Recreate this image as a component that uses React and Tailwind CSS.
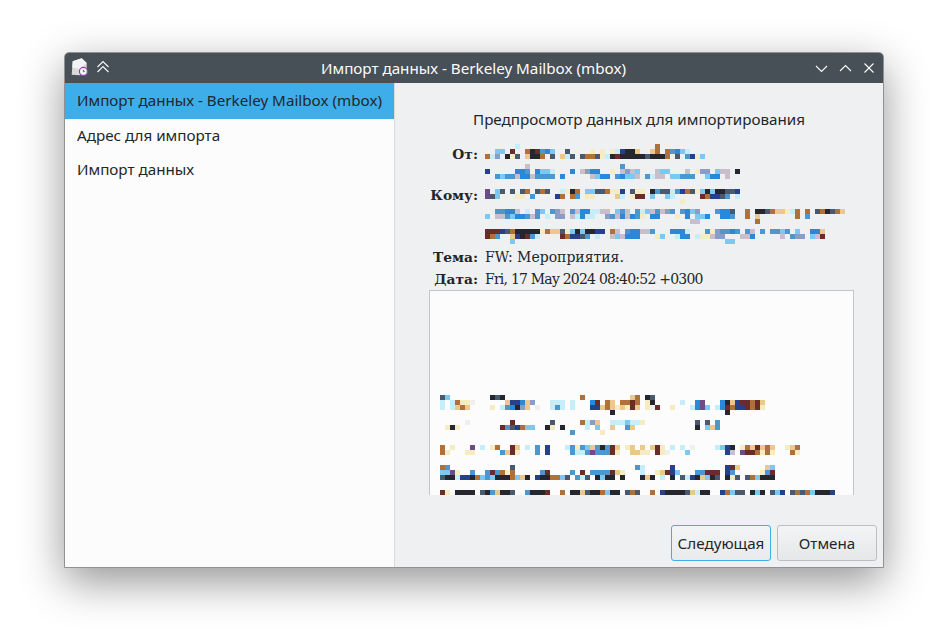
const COLORS = {
  d: "#26262e",
  s: "#4a5a6e",
  n: "#27408b",
  b: "#2b88d8",
  u: "#4d97cc",
  l: "#7cc8f0",
  c: "#c5eef8",
  w: "#eef0ec",
  y: "#f5ecc4",
  t: "#ebc98c",
  o: "#b0703a",
  m: "#6a2c28",
  p: "#6e4a88",
  g: "#c9bfcc",
  h: "#8a9cc8",
};

/* blurred addresses, one string per 5px row: "<cell><colour>" */
const FROM_ROWS = [
  "6c 34o",
  "2l 3l 5m 6w 8o 9d 10m 11u 12b 13l 16s 18w 21y 23y 25y 26c 27n 28d 29d 30t 33t 34o 36o 37u 38b 39l 40c",
  "0o 1c 2h 4d 5y 6s 8t 9d 10d 11o 13s 15t 16c 17s 19s 20o 21o 22s 23y 24c 25d 26m 27d 28d 29d 30d 31d 32s 33d 34d 35d 36o 37w 38s 40u 41n 42y 43l",
  "",
  "8g 27u 32w",
  "0n 6b 7b 8u 10b 11l 12l 13c 14w 15w 17b 19g 20h 21b 22b 25y 26w 27g 28h 29g 30l 34g 35l 36l 40g 42y 43h 44h 46l 47g 48g 50d",
  "2u 3l 4u 5u 6g 7b 8b 9g 10u 11u 12u 13u 15b 21g 22l 23b 24b 26u 27b 28l 29l 30g 31w 32u 33c 34g 35g 37l 38l 39u 40u 41u 43w 44l 45b 46b 48g",
];

const TO_ROWS = [
  "",
  "0p 2l 3s 5s 7s 8o 10s 11o 12s 15c 16y 17d 18o 20l 21l 22s 23s 24o 25y 26y 27n 29s 30y 31y 33d 34u 35s 36s 37c 38u 39n 40o 41s 42y 43l 44d 45l 46d 47d 48s 49s 50n",
  "0p 1s 2l 3w 4w 6y 7y 9u 14n 15o 17o 18u 20y 21y 26t 27c 29y 30m 31m 33l 36l 37c 43m 44o 45n 46n 47s 48u 50c",
  "39y",
  "",
  "1w 2u 3u 4b 5b 6g 8c 10u 11l 13u 14h 15g 17u 18g 19b 20b 21c 22c 23g 24g 26l 27u 28g 30u 31c 32l 33g 34u 35g 36h 37u 39u 40b 41l 42h 46u 47b 48b 49s 52o 54d 55d 56s 57o 58t 59t 60y 61c 62o 64o 66s 67o 68d 69s 70o 71t",
  "0l 2g 3g 4u 5l 6b 7b 8u 9g 10u 12c 14h 15h 17g 18c 19b 20c 21c 24h 25u 26g 27b 28g 29b 30u 31y 32w 33b 34b 38y 40b 42l 43l 44b 47b 48b 49u 52o 54t 62o 64u",
  "41g 42g 54o",
  "",
  "0m 1m 2m 3n 4s 5o 6d 7d 8d 9d 10d 11y 12o 13t 14t 15s 16y 17l 18d 19l 20d 21d 22n 23n 25o 26g 28u 29b 30b 31g 32g 33u 35w 36w 37b 38b 39b 40c 41w 44u 45y 46h 47u 48u 49b 50u 52u 53g 55u 57u 58u 59l 60u 62l 65b 66b 67t",
  "0m 1o 2u 5t 6n 7d 8m 9u 10c 15m 16o 17n 18n 19s 20u 22c 24w 25g 26l 27g 28b 29b 30b 34y 35l 36w 38c 39b 40b 42c 43y 44y 45g 46h 47h 51g 52g 53b 59g 61u 62h 63h 65l 66g 67m",
  "5l 48l 49l",
];

const BODY_ROWS = [
  "0s 1l 10d 11s 12d 28o 38t 39o 41d 42s",
  "0c 2c 3o 4y 5y 6w 13t 14n 15n 16b 17t 18h 22c 23c 24c 26c 30b 31m 33o 34t 36o 37o 38m 39o 41y 42d 48c 51b 52p 56b 57d 58t 59n 60m 61m 62o 63m 64t",
  "0c 2c 3t 4o 5t 10y 12c 13u 14b 15d 16h 17t 19w 22c 23u 24c 26c 30n 31n 32t 33o 34t 35y 36t 37y 38m 39t 41y 42w 43m 46y 50c 51b 52p 53l 55c 56b 57m 58o 59n 60n 61m 62o 63m 64y",
  "34d 57d",
  "",
  "5w 14m 22s 28o 29c 30h 31t 34c 35c 36c 37l 38c 39c 40y 51s 53s 55u",
  "1y 2d 3y 12m 13u 14s 15n 16o 17l 18l 21d 22y 24d 29c 31l 34t 37u 38t 51d 53l 54t 55u",
  "26u 32y",
  "",
  "",
  "0o 2y 6p 8c 10y 11o 14m 15t 17c 19u 21n 25c 26u 27y 28u 29l 30t 31u 32d 33u 34m 35t 37y 38t 40t 42t 43m 44y 46c 48c 50w 55c 56l 57n 58d 60y 61o 62t 63m 64t 65o 66t 69y 70t 71o",
  "0o 1y 5y 6y 12u 13t 14m 15y 19u 21n 26u 27c 28c 29u 30p 31u 32u 33u 34m 35y 38t 39t 40y 41y 43m 44y 45w 49l 57n 58g 60p 61m 62m 63o 64y 65o 66y 70o 71y",
  "",
  "",
  "0o 1u 14s 39u 40c 46n 57n 58m 59t 65t 66l",
  "0l 1l 2p 3y 6u 9u 10m 11u 12o 13y 14o 20u 21m 26u 28m 30u 31u 32u 33u 34m 35t 36y 40c 43y 44t 45m 46n 47l 51u 52u 53m 54m 55m 57n 58u 64y 65u 66m",
  "0s 1d 2d 3c 4n 5n 6d 7o 8l 9u 10l 11d 12d 13d 14o 15l 16t 17d 19n 20d 21d 22o 23o 24l 25s 27u 28c 29s 31d 32l 33d 34d 36d 40d 41t 42d 44c 46d 48s 49c 50n 51d 52t 53l 54d 55s 57d 58y 59s 61s 62o 63l 64d 65d 66d",
  "",
  "",
  "0m 1y 3d 4d 5d 6d 8s 9d 10u 11t 12d 13d 14s 17u 18d 19d 20d 21m 24o 26d 27d 28t 29s 30d 31d 32o 33l 34d 35d 37s 38o 39s 42o 44n 45d 46d 47d 48d 49s 50t 51c 52d 53d 56n 57o 58l 59s 60s 62d 63l 64d 66s 67l 68n 70s 71o 72s 73o 74l 75d 76d 77d 78n",
];

function Mosaic({ rows, width }) {
  return (
    <svg width={width} height={rows.length * 5} className="block" shapeRendering="crispEdges">
      {rows.map((row, y) =>
        row
          .split(" ")
          .filter(Boolean)
          .map((cell) => (
            <rect
              key={`${y}-${cell}`}
              x={parseInt(cell, 10) * 5}
              y={y * 5}
              width="5"
              height="5"
              fill={COLORS[cell.slice(-1)]}
            />
          ))
      )}
    </svg>
  );
}

function AppIcon() {
  return (
    <svg width="20" height="20" viewBox="0 0 20 20" className="shrink-0">
      <path d="M2.7 3.3 L11.7 0.3 L16.7 5 L16.7 13 L10 17.3 L1.7 16.7 Z" fill="#d9d9d9" />
      <path d="M2.7 3.3 L11.7 0.3 L16.7 5 L10 11 L2.3 9.5 Z" fill="#f2f2f2" />
      <circle cx="13.4" cy="13.4" r="4" fill="#f4f4f4" stroke="#8e44ad" strokeWidth="1.2" />
      <path d="M13.4 11.8 V13.6 H14.8" fill="none" stroke="#555555" strokeWidth="0.9" />
    </svg>
  );
}

function Label({ children }) {
  return (
    <div className="w-[83px] text-right font-bold text-[13.8px] leading-[20px] text-[#232629]">
      {children}
    </div>
  );
}

const titleText = "Импорт данных - Berkeley Mailbox (mbox)";

export default function App() {
  return (
    <div className="w-[948px] h-[644px] bg-white pl-[64px] pt-[52px] font-['Noto_Sans',sans-serif] overflow-hidden">
      <div className="w-[820px] h-[516px] flex flex-col rounded-t-[5px] border border-[#8f9194] bg-[#eff0f1] shadow-[0_14px_44px_rgba(0,0,0,0.42)]">
        {/* TITLE BAR */}
        <div className="h-[30px] shrink-0 flex items-center bg-[#475057] rounded-t-[4px] pl-[5px] pr-[8px] text-[#fcfcfc]">
          <AppIcon />
          <svg width="14" height="14" viewBox="0 0 14 14" className="ml-[6px] shrink-0 -mt-[2px]">
            <path d="M1.5 7 L7 1.5 L12.5 7 M1.5 12 L7 6.5 L12.5 12" fill="none" stroke="#fcfcfc" strokeWidth="1.1" />
          </svg>
          <div className="flex-1 text-center text-[15.2px] ml-[22px]">{titleText}</div>
          <div className="flex items-center gap-[11px]">
            <svg width="13" height="13" viewBox="0 0 13 13">
              <path d="M1 4 L6.5 9.5 L12 4" fill="none" stroke="#fcfcfc" strokeWidth="1.1" />
            </svg>
            <svg width="13" height="13" viewBox="0 0 13 13">
              <path d="M1 9 L6.5 3.5 L12 9" fill="none" stroke="#fcfcfc" strokeWidth="1.1" />
            </svg>
            <svg width="12" height="12" viewBox="0 0 12 12">
              <path d="M1.5 1.5 L10.5 10.5 M10.5 1.5 L1.5 10.5" fill="none" stroke="#fcfcfc" strokeWidth="1.1" />
            </svg>
          </div>
        </div>

        <div className="flex-1 flex min-h-0">
          {/* STEPS */}
          <div className="w-[330px] shrink-0 bg-[#fcfcfc] border-r border-[#d8dadc] text-[15.2px] text-[#232629]">
            <div className="h-[36px] flex items-center pl-[12px] pb-[2px] bg-[#3daee9]">{titleText}</div>
            <div className="h-[34px] flex items-center pl-[12px] pb-[2px]">Адрес для импорта</div>
            <div className="h-[34px] flex items-center pl-[12px] pb-[2px]">Импорт данных</div>
          </div>

          {/* PREVIEW */}
          <div className="flex-1 flex flex-col min-w-0">
            <div className="h-[61px] pt-[26px] text-center text-[15.2px] leading-[20px] text-[#232629]">
              Предпросмотр данных для импортирования
            </div>
            <div className="font-['DejaVu_Serif',serif]">
              <div className="flex">
                <Label>От:</Label>
                <div className="ml-[7px]">
                  <Mosaic rows={FROM_ROWS} width={360} />
                </div>
              </div>
              <div className="flex mt-[5px]">
                <div className="pt-[1px]">
                  <Label>Кому:</Label>
                </div>
                <div className="ml-[7px]">
                  <Mosaic rows={TO_ROWS} width={362} />
                </div>
              </div>
              <div className="flex mt-[2px] items-center h-[22px]">
                <Label>Тема:</Label>
                <div className="ml-[7px] text-[14px] text-[#232629]">FW: Мероприятия.</div>
              </div>
              <div className="flex items-center h-[22px]">
                <Label>Дата:</Label>
                <div className="ml-[7px] text-[14px] tracking-[-0.78px] text-[#232629]">Fri, 17 May 2024 08:40:52 +0300</div>
              </div>
            </div>
            <div className="ml-[34px] w-[425px] h-[205px] shrink-0 overflow-hidden bg-[#fcfcfc] border-x border-t border-[#c2c4c6] pl-[10px] pt-[104px]">
              <Mosaic rows={BODY_ROWS} width={400} />
            </div>
            <div className="flex justify-end gap-[6px] pr-[6px] mt-[30px]">
              <button className="w-[100px] h-[36px] rounded-[3px] border border-[#3daee9] bg-gradient-to-b from-[#f3f4f5] to-[#e9eaeb] text-[15.2px] text-[#232629]">
                Следующая
              </button>
              <button className="w-[100px] h-[36px] rounded-[3px] border border-[#bcbec0] bg-gradient-to-b from-[#f3f4f5] to-[#e6e7e8] text-[15.2px] text-[#232629]">
                Отмена
              </button>
            </div>
          </div>
        </div>
      </div>
    </div>
  );
}
